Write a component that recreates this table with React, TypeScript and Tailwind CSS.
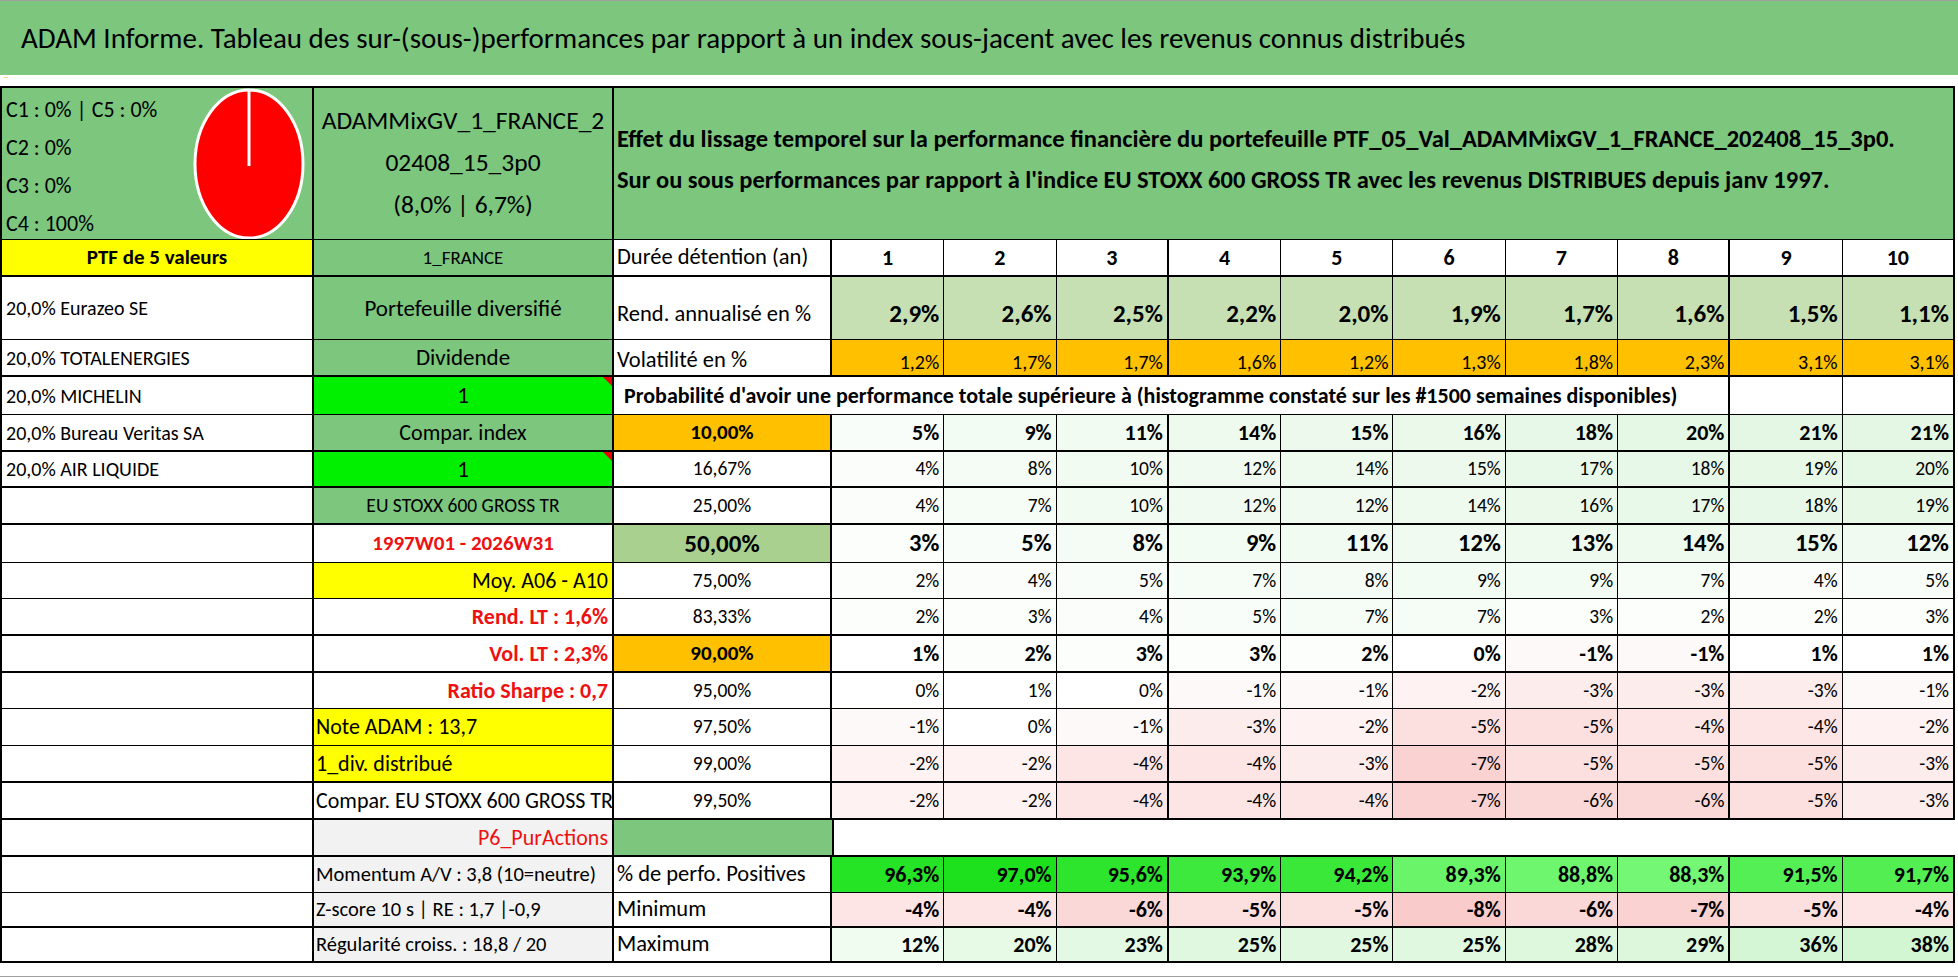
import React from "react";

const FONT =
  "font-[family-name:Carlito,Calibri,Liberation_Sans_Narrow,DejaVu_Sans_Condensed,sans-serif]";
const COLS = "grid grid-cols-[312px_300px_218px_repeat(10,112.3px)]";

const GREEN = "bg-[#7dc67d]";

const probRows: { label: string; vals: number[]; kind: "bold" | "big" | "norm"; c3: string }[] = [
  { label: "10,00%", vals: [5, 9, 11, 14, 15, 16, 18, 20, 21, 21], kind: "bold", c3: "bg-[#ffc000] font-bold text-[21px]" },
  { label: "16,67%", vals: [4, 8, 10, 12, 14, 15, 17, 18, 19, 20], kind: "norm", c3: "text-[19.5px]" },
  { label: "25,00%", vals: [4, 7, 10, 12, 12, 14, 16, 17, 18, 19], kind: "norm", c3: "text-[19.5px]" },
  { label: "50,00%", vals: [3, 5, 8, 9, 11, 12, 13, 14, 15, 12], kind: "big", c3: "bg-[#a9d08e] font-bold text-[25px]" },
  { label: "75,00%", vals: [2, 4, 5, 7, 8, 9, 9, 7, 4, 5], kind: "norm", c3: "text-[19.5px]" },
  { label: "83,33%", vals: [2, 3, 4, 5, 7, 7, 3, 2, 2, 3], kind: "norm", c3: "text-[19.5px]" },
  { label: "90,00%", vals: [1, 2, 3, 3, 2, 0, -1, -1, 1, 1], kind: "bold", c3: "bg-[#ffc000] font-bold text-[21px]" },
  { label: "95,00%", vals: [0, 1, 0, -1, -1, -2, -3, -3, -3, -1], kind: "norm", c3: "text-[19.5px]" },
  { label: "97,50%", vals: [-1, 0, -1, -3, -2, -5, -5, -4, -4, -2], kind: "norm", c3: "text-[19.5px]" },
  { label: "99,00%", vals: [-2, -2, -4, -4, -3, -7, -5, -5, -5, -3], kind: "norm", c3: "text-[19.5px]" },
  { label: "99,50%", vals: [-2, -2, -4, -4, -4, -7, -6, -6, -5, -3], kind: "norm", c3: "text-[19.5px]" },
];

function probBg(v: number) {
  if (v > 0) {
    const t = Math.min(v / 21, 1);
    return `rgb(${Math.round(255 - 27 * t)},${Math.round(255 - 8 * t)},${Math.round(255 - 27 * t)})`;
  }
  if (v < 0) {
    const t = Math.min(-v / 8, 1);
    return `rgb(${Math.round(255 - 5 * t)},${Math.round(255 - 52 * t)},${Math.round(255 - 52 * t)})`;
  }
  return "#ffffff";
}
function maxBg(v: number) {
  const t = Math.min(v / 38, 1);
  return `rgb(${Math.round(252 - 42 * t)},${Math.round(255 - 10 * t)},${Math.round(252 - 42 * t)})`;
}
function posBg(v: number) {
  const t = Math.max(0, Math.min((v - 88.3) / (97 - 88.3), 1));
  return `rgb(${Math.round(116 - 86 * t)},${Math.round(247 - 22 * t)},${Math.round(116 - 86 * t)})`;
}

function numR(i: number) {
  return i === 2 || i === 7 || i === 9 ? "border-r-2" : "border-r";
}

function Row({ h, children }: { h: string; children: React.ReactNode }) {
  return <div className={`${COLS} ${h}`}>{children}</div>;
}

function Cell({
  className = "",
  children,
  style,
}: {
  className?: string;
  children?: React.ReactNode;
  style?: React.CSSProperties;
}) {
  return (
    <div
      style={style}
      className={`relative flex items-center overflow-hidden whitespace-nowrap border-black ${className}`}
    >
      {children}
    </div>
  );
}

function Tri() {
  return (
    <span className="absolute right-0 top-0 h-0 w-0 border-l-[9px] border-t-[9px] border-l-transparent border-t-[#e80000]" />
  );
}

const leftNames = [
  "20,0% Eurazeo SE",
  "20,0% TOTALENERGIES",
  "20,0% MICHELIN",
  "20,0% Bureau Veritas SA",
  "20,0% AIR LIQUIDE",
];

const rowH = ["h-[37px]", "h-[36px]", "h-[37px]", "h-[38px]", "h-[36px]", "h-[37px]", "h-[37px]", "h-[36px]", "h-[37px]", "h-[37px]", "h-[37px]"];
const rowB = ["border-b-2", "border-b-2", "border-b-2", "border-b", "border-b", "border-b-2", "border-b-2", "border-b", "border-b", "border-b-2", "border-b-2"];

const LBL = "text-[22.5px]";
const NAME = "text-[20px]";

export default function App() {
  const rend = ["2,9%", "2,6%", "2,5%", "2,2%", "2,0%", "1,9%", "1,7%", "1,6%", "1,5%", "1,1%"];
  const vol = ["1,2%", "1,7%", "1,7%", "1,6%", "1,2%", "1,3%", "1,8%", "2,3%", "3,1%", "3,1%"];
  const pos = [96.3, 97.0, 95.6, 93.9, 94.2, 89.3, 88.8, 88.3, 91.5, 91.7];
  const mins = [-4, -4, -6, -5, -5, -8, -6, -7, -5, -4];
  const maxs = [12, 20, 23, 25, 25, 25, 28, 29, 36, 38];
  const fmt1 = (v: number) => v.toFixed(1).replace(".", ",") + "%";

  const redR = "bg-white justify-end pr-[4px] border-r-2 text-[22px] font-bold text-[#ee1111]";
  const col2: { cls: string; content: React.ReactNode }[] = [
    { cls: `${GREEN} justify-center border-r-2 text-[22px]`, content: "Compar. index" },
    { cls: "bg-[#00f000] justify-center border-r-2 text-[23px]", content: <>1<Tri /></> },
    { cls: `${GREEN} justify-center border-r-2 text-[19.5px]`, content: "EU STOXX 600 GROSS TR" },
    { cls: "bg-white justify-center border-r-2 text-[21px] font-bold text-[#ee1111]", content: "1997W01 - 2026W31" },
    { cls: "bg-[#ffff00] justify-end pr-[4px] border-r-2 text-[22px]", content: "Moy. A06 - A10" },
    { cls: redR, content: "Rend. LT : 1,6%" },
    { cls: redR, content: "Vol. LT : 2,3%" },
    { cls: redR, content: "Ratio Sharpe : 0,7" },
    { cls: "bg-[#ffff00] pl-[2px] border-r-2 text-[22px]", content: "Note ADAM : 13,7" },
    { cls: "bg-[#ffff00] pl-[2px] border-r-2 text-[22px]", content: "1_div. distribué" },
    { cls: "bg-white pl-[2px] border-r-2 text-[22px]", content: "Compar. EU STOXX 600 GROSS TR" },
  ];

  return (
    <div className={`relative h-[979px] w-[1958px] overflow-hidden bg-white leading-none text-black ${FONT}`}>
      {/* Title */}
      <div className="flex h-[75px] items-center border-t border-[#a0a0a0] bg-[#7dc67d] pl-[21px] text-[29px]">
        ADAM Informe. Tableau des sur-(sous-)performances par rapport à un index sous-jacent avec les revenus connus distribués
      </div>
      <div className="relative h-[11px] bg-white">
        <span className="absolute left-[4px] top-[1px] text-[8px] text-[#e0a000]">˙˙</span>
      </div>

      {/* Table */}
      <div className="w-[1955px] border-l-2 border-t-2 border-black">
        {/* Top block */}
        <Row h="h-[152px]">
          <Cell className={`${GREEN} items-start justify-between border-b border-r-2 pl-[4px] pr-[6px]`}>
            <div className="pt-[3px] text-[22px] leading-[38px]">
              <div>C1 : 0% | C5 : 0%</div>
              <div>C2 : 0%</div>
              <div>C3 : 0%</div>
              <div>C4 : 100%</div>
            </div>
            <svg width="114" height="152" viewBox="0 0 114 152" className="shrink-0">
              <ellipse cx="57" cy="76" rx="54" ry="74" fill="#ff0000" stroke="#ffffff" strokeWidth="3" />
              <line x1="57" y1="2" x2="57" y2="78" stroke="#ffffff" strokeWidth="3" />
            </svg>
          </Cell>
          <Cell className={`${GREEN} items-start justify-center border-b border-r-2 pt-[12px]`}>
            <div className="flex flex-col items-center text-[25.5px] leading-[42px]">
              <div>ADAMMixGV_1_FRANCE_2</div>
              <div>02408_15_3p0</div>
              <div>(8,0% | 6,7%)</div>
            </div>
          </Cell>
          <Cell className={`${GREEN} col-span-11 items-start border-b border-r-2 pl-[3px] pt-[31px]`}>
            <div className="text-[24.5px] font-bold leading-[41px]">
              <div>Effet du lissage temporel sur la performance financière du portefeuille PTF_05_Val_ADAMMixGV_1_FRANCE_202408_15_3p0.</div>
              <div>Sur ou sous performances par rapport à l'indice EU STOXX 600 GROSS TR avec les revenus DISTRIBUES depuis janv 1997.</div>
            </div>
          </Cell>
        </Row>

        {/* Durée */}
        <Row h="h-[37px]">
          <Cell className="justify-center border-b-2 border-r-2 bg-[#ffff00] text-[21px] font-bold">PTF de 5 valeurs</Cell>
          <Cell className={`${GREEN} justify-center border-b-2 border-r-2 text-[19px]`}>1_FRANCE</Cell>
          <Cell className={`border-b-2 border-r-2 bg-white pl-[3px] ${LBL}`}>Durée détention (an)</Cell>
          {Array.from({ length: 10 }, (_, i) => (
            <Cell key={i} className={`justify-center border-b-2 ${numR(i)} bg-white text-[22px] font-bold`}>
              {i + 1}
            </Cell>
          ))}
        </Row>

        {/* Rend annualisé */}
        <Row h="h-[63px]">
          <Cell className={`border-b border-r-2 bg-white pl-[4px] ${NAME}`}>{leftNames[0]}</Cell>
          <Cell className={`${GREEN} justify-center border-b border-r-2 text-[23px]`}>Portefeuille diversifié</Cell>
          <Cell className={`items-end border-b border-r-2 bg-white pb-[14px] pl-[3px] ${LBL}`}>Rend. annualisé en %</Cell>
          {rend.map((v, i) => (
            <Cell key={i} className={`items-end justify-end border-b ${numR(i)} bg-[#c6e0b4] pb-[13px] pr-[4px] text-[25px] font-bold`}>
              {v}
            </Cell>
          ))}
        </Row>

        {/* Volatilité */}
        <Row h="h-[37px]">
          <Cell className={`border-b-2 border-r-2 bg-white pl-[4px] ${NAME}`}>{leftNames[1]}</Cell>
          <Cell className={`${GREEN} justify-center border-b-2 border-r-2 text-[23px]`}>Dividende</Cell>
          <Cell className={`items-end border-b-2 border-r-2 bg-white pb-[4px] pl-[3px] ${LBL}`}>Volatilité en %</Cell>
          {vol.map((v, i) => (
            <Cell key={i} className={`items-end justify-end border-b-2 ${numR(i)} bg-[#ffc000] pb-[3px] pr-[4px] text-[20px]`}>
              {v}
            </Cell>
          ))}
        </Row>

        {/* Probabilité header */}
        <Row h="h-[38px]">
          <Cell className={`border-b border-r-2 bg-white pl-[4px] ${NAME}`}>{leftNames[2]}</Cell>
          <Cell className="justify-center border-b border-r-2 bg-[#00f000] text-[23px]">
            1<Tri />
          </Cell>
          <Cell className="col-span-9 border-b border-r-2 bg-white pl-[10px] text-[22px] font-bold">
            Probabilité d'avoir une performance totale supérieure à (histogramme constaté sur les #1500 semaines disponibles)
          </Cell>
          <Cell className="border-b border-r bg-white" />
          <Cell className="border-b border-r-2 bg-white" />
        </Row>

        {/* Probability block */}
        {probRows.map((r, ri) => (
          <Row key={ri} h={rowH[ri]}>
            <Cell className={`${rowB[ri]} border-r-2 bg-white pl-[4px] ${NAME}`}>{ri < 2 ? leftNames[ri + 3] : ""}</Cell>
            <Cell className={`${col2[ri].cls} ${rowB[ri]}`}>{col2[ri].content}</Cell>
            <Cell className={`justify-center border-r-2 ${rowB[ri]} ${r.c3}`}>{r.label}</Cell>
            {r.vals.map((v, i) => (
              <Cell
                key={i}
                style={{ backgroundColor: probBg(v) }}
                className={`justify-end pr-[4px] ${rowB[ri]} ${numR(i)} ${
                  r.kind === "big" ? "text-[24.5px] font-bold" : r.kind === "bold" ? "text-[22px] font-bold" : "text-[19.5px]"
                }`}
              >
                {v}%
              </Cell>
            ))}
          </Row>
        ))}

        {/* P6 row */}
        <Row h="h-[37px]">
          <Cell className="border-b-2 border-r-2 bg-white" />
          <Cell className="justify-end border-b-2 border-r-2 bg-[#f2f2f2] pr-[4px] text-[22px] text-[#ee1111]">P6_PurActions</Cell>
          <Cell className={`${GREEN} border-b-2`} />
          <Cell className="col-span-10 border-b-2 border-l-2 bg-white" />
        </Row>

        {/* % perfo positives */}
        <Row h="h-[36px]">
          <Cell className="border-b border-r-2 bg-white" />
          <Cell className="border-b border-r-2 bg-[#f2f2f2] pl-[2px] text-[20.5px]">Momentum A/V : 3,8 (10=neutre)</Cell>
          <Cell className={`border-b border-r-2 bg-white pl-[3px] ${LBL}`}>% de perfo. Positives</Cell>
          {pos.map((v, i) => (
            <Cell key={i} style={{ backgroundColor: posBg(v) }} className={`justify-end border-b ${numR(i)} pr-[4px] text-[22px] font-bold`}>
              {fmt1(v)}
            </Cell>
          ))}
        </Row>

        {/* Minimum */}
        <Row h="h-[35px]">
          <Cell className="border-b-2 border-r-2 bg-white" />
          <Cell className="border-b-2 border-r-2 bg-[#f2f2f2] pl-[2px] text-[20.5px]">Z-score 10 s | RE : 1,7 |-0,9</Cell>
          <Cell className={`border-b-2 border-r-2 bg-white pl-[3px] ${LBL}`}>Minimum</Cell>
          {mins.map((v, i) => (
            <Cell key={i} style={{ backgroundColor: probBg(v) }} className={`justify-end border-b-2 ${numR(i)} pr-[4px] text-[22px] font-bold`}>
              {v}%
            </Cell>
          ))}
        </Row>

        {/* Maximum */}
        <Row h="h-[35px]">
          <Cell className="border-b-2 border-r-2 bg-white" />
          <Cell className="border-b-2 border-r-2 bg-[#f2f2f2] pl-[2px] text-[20.5px]">Régularité croiss. : 18,8 / 20</Cell>
          <Cell className={`border-b-2 border-r-2 bg-white pl-[3px] ${LBL}`}>Maximum</Cell>
          {maxs.map((v, i) => (
            <Cell key={i} style={{ backgroundColor: maxBg(v) }} className={`justify-end border-b-2 ${numR(i)} pr-[4px] text-[22px] font-bold`}>
              {v}%
            </Cell>
          ))}
        </Row>
      </div>

      <div className="h-[13px]" />
      <div className="h-px w-full bg-[#a0a0a0]" />
    </div>
  );
}
